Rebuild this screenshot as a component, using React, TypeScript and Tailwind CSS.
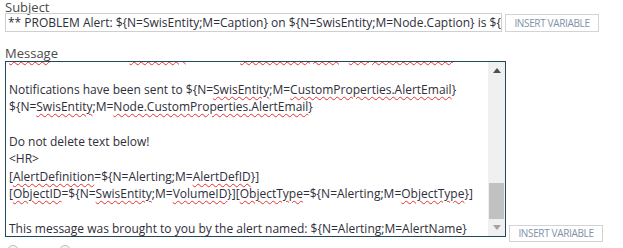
import React from 'react';

const font = { fontFamily: '"Open Sans", "Noto Sans", sans-serif' };

function Sq({ children }: { children: React.ReactNode }) {
  return (
    <span className="underline decoration-wavy decoration-[#e53030] decoration-1 underline-offset-[2px]">
      {children}
    </span>
  );
}

function InsertButton({ className = '' }: { className?: string }) {
  return (
    <button
      className={`w-[94px] border border-[#d3d3d3] bg-white text-[10px] uppercase tracking-[-0.35px] text-[#7d92a8] flex items-center justify-center ${className}`}
    >
      Insert Variable
    </button>
  );
}

function Arrow({ up, color }: { up?: boolean; color: string }) {
  return (
    <svg width="8" height="5" viewBox="0 0 8 5">
      <path d={up ? 'M0 5 L4 0 L8 5 Z' : 'M0 0 L4 5 L8 0 Z'} fill={color} />
    </svg>
  );
}

export default function App() {
  return (
    <div className="w-[623px] h-[248px] overflow-hidden bg-white px-[5px] text-[#2e2e3a]" style={font}>
      <div className="text-[13px] leading-[13px] text-[#4a4a4a] pt-[1px]">Subject</div>

      <div className="flex items-start mt-[-1px]">
        <div className="w-[497px] h-[19px] border border-[#cfcfcf] overflow-hidden whitespace-nowrap text-[12px] leading-[17px] pl-[2px]">
          ** PROBLEM Alert: ${'{'}N=SwisEntity;M=Caption{'}'} on ${'{'}N=SwisEntity;M=Node.Caption{'}'} is ${'{'}N=SwisEntity;M=Status{'}'}
        </div>
        <InsertButton className="ml-[3px] mt-[1px] h-[18px]" />
      </div>

      <div className="text-[13px] leading-[13px] text-[#4a4a4a] mt-[15px]">Message</div>

      <div className="flex items-end mt-[1px]">
        <div className="w-[501px] h-[176px] border border-[#1f4a5e] flex overflow-hidden">
          <div className="flex-1 overflow-hidden whitespace-nowrap text-[12px] leading-[17.4px] pl-[3px]">
            <div className="mt-[-16px]">
              <div>
                <Sq>Alerted</Sq> on node ${'{'}N=<Sq>SwisEntity</Sq>;M=Node.<Sq>StatusDescription</Sq>{'}'}_<Sq>ResponseTimeURL</Sq>
              </div>
              <div>&nbsp;</div>
              <div>
                Notifications have been sent to ${'{'}N=<Sq>SwisEntity</Sq>;M=<Sq>CustomProperties.AlertEmail</Sq>{'}'}
              </div>
              <div>
                ${'{'}N=<Sq>SwisEntity</Sq>;M=<Sq>Node.CustomProperties.AlertEmail</Sq>{'}'}
              </div>
              <div>&nbsp;</div>
              <div>Do not delete text below!</div>
              <div>&lt;HR&gt;</div>
              <div>
                [<Sq>AlertDefinition</Sq>=${'{'}N=Alerting;M=<Sq>AlertDefID</Sq>{'}'}]
              </div>
              <div>
                [<Sq>ObjectID</Sq>=${'{'}N=<Sq>SwisEntity</Sq>;M=<Sq>VolumeID</Sq>{'}'}][<Sq>ObjectType</Sq>=${'{'}N=Alerting;M=<Sq>ObjectType</Sq>{'}'}]
              </div>
              <div>&nbsp;</div>
              <div>
                This message was brought to you by the alert named: ${'{'}N=Alerting;M=<Sq>AlertName</Sq>{'}'}
              </div>
            </div>
          </div>
          <div className="w-[17px] bg-[#f0f0f0] flex flex-col items-center">
            <div className="h-[17px] flex items-center justify-center">
              <Arrow up color="#505050" />
            </div>
            <div className="flex-1 w-full flex flex-col justify-end px-[1px]">
              <div className="h-[36px] bg-[#c1c1c1]" />
            </div>
            <div className="h-[17px] flex items-center justify-center">
              <Arrow color="#a3a3a3" />
            </div>
          </div>
        </div>
        <InsertButton className="ml-[3px] mb-[-5px] h-[17px]" />
      </div>

      <div className="flex gap-[40px] mt-[8px] pl-[2px]">
        <div className="w-[12px] h-[12px] rounded-full border border-[#bdbdbd] bg-[#f4f4f4]" />
        <div className="w-[12px] h-[12px] rounded-full border border-[#bdbdbd] bg-[#f4f4f4]" />
      </div>
    </div>
  );
}
